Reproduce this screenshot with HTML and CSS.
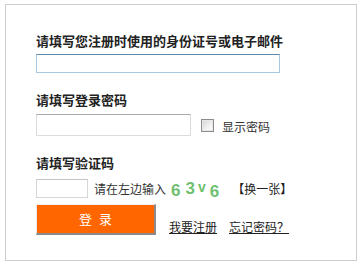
FILE: index.html
```html
<!DOCTYPE html>
<html lang="zh-CN">
<head>
<meta charset="utf-8">
<title>登录</title>
<link rel="stylesheet" href="styles.css">
</head>
<body>
<div class="box">
  <h2 class="label first">请填写您注册时使用的身份证号或电子邮件</h2>
  <div class="row row-user">
    <input class="input input-user" type="text">
  </div>
  <h2 class="label">请填写登录密码</h2>
  <div class="row row-pwd">
    <input class="input input-pwd" type="password">
    <span class="check"></span>
    <span class="text show-pwd">显示密码</span>
  </div>
  <h2 class="label">请填写验证码</h2>
  <div class="row row-code">
    <input class="input input-code" type="text">
    <span class="text hint">请在左边输入</span>
    <span class="captcha"><span class="c c1">6</span><span class="c c2">3</span><span class="c c3">v</span><span class="c c4">6</span></span>
    <span class="text change">【换一张】</span>
  </div>
  <div class="row row-submit">
    <button class="btn" type="button">登 录</button>
    <a class="link" href="#">我要注册</a>
    <a class="link" href="#">忘记密码？</a>
  </div>
</div>
</body>
</html>
```

FILE: styles.css
```css
html, body {
  margin: 0;
  padding: 0;
  background: #fff;
}
body {
  font-family: "Noto Sans CJK SC", "Liberation Sans", sans-serif;
  color: #333;
  font-size: 12px;
}
.box {
  margin: 4px 6px 0 5px;
  border: 1px solid #cdcdcd;
  height: 255px;
  box-sizing: border-box;
  padding: 28px 0 0 30px;
}
.box {
  height: 257px;
}
.label {
  margin: 19px 0 0 0;
  font-size: 13px;
  line-height: 16px;
  font-weight: bold;
  color: #222;
}
.label.first {
  margin-top: 0;
}
.row {
  display: flex;
  align-items: center;
}
.row-user { margin-top: 5px; }
.row-pwd { margin-top: 6px; }
.row-code { margin-top: 6px; }
.row-submit {
  margin-top: 4px;
  align-items: flex-end;
}
.input {
  box-sizing: border-box;
  margin: 0;
  padding: 0 3px;
  background: #fff;
  outline: none;
  font-size: 12px;
}
.input-user {
  width: 244px;
  height: 19px;
  border: 1px solid #a8c8e1;
  border-top-color: #5f8ab0;
}
.input-pwd {
  width: 155px;
  height: 22px;
  border: 1px solid #dcdcdc;
  border-top-color: #ababab;
}
.input-code {
  width: 52px;
  height: 19px;
  border: 1px solid #d6d6d6;
  border-top-color: #c4c4c4;
}
.check {
  box-sizing: border-box;
  width: 13px;
  height: 13px;
  margin: 1px 0 0 10px;
  border: 1px solid #8c8c8c;
  background: linear-gradient(135deg, #d4d4d4 0%, #f2f2f2 60%, #fff 100%);
  box-shadow: inset 0 0 0 1px #e6e6e6;
}
.text {
  line-height: 16px;
  color: #333;
}
.show-pwd {
  margin: 3px 0 0 8px;
}
.hint {
  margin: 1px 0 0 6px;
}
.captcha {
  display: flex;
  align-items: flex-start;
  height: 20px;
  margin: 3px 0 0 5px;
  font-family: "Liberation Sans", Arial, sans-serif;
  font-weight: bold;
  color: #70bf70;
  font-size: 17px;
  line-height: 17px;
}
.c { display: block; }
.c1 { margin-top: 2px; }
.c2 { margin-top: 0; margin-left: 5px; }
.c3 { margin-top: 0; margin-left: 3px; font-size: 14px; line-height: 14px; }
.c4 { margin-top: 3px; margin-left: 4px; }
.change {
  margin: 1px 0 0 13px;
  color: #222;
}
.btn {
  box-sizing: border-box;
  width: 120px;
  height: 31px;
  margin: 0;
  padding: 0 0 2px 0;
  background: #ff6600;
  border-style: solid;
  border-width: 1px 2px 2px 1px;
  border-color: #f0f0f0 #8a8a8a #8a8a8a #e8e8e8;
  color: #fff;
  font-family: "Noto Sans CJK SC", "Liberation Sans", sans-serif;
  font-size: 13px;
  word-spacing: 4px;
  cursor: pointer;
}
.link {
  margin-left: 13px;
  margin-bottom: 0;
  line-height: 16px;
  color: #222;
  text-decoration: underline;
}
.link + .link {
  margin-left: 12px;
}
```
